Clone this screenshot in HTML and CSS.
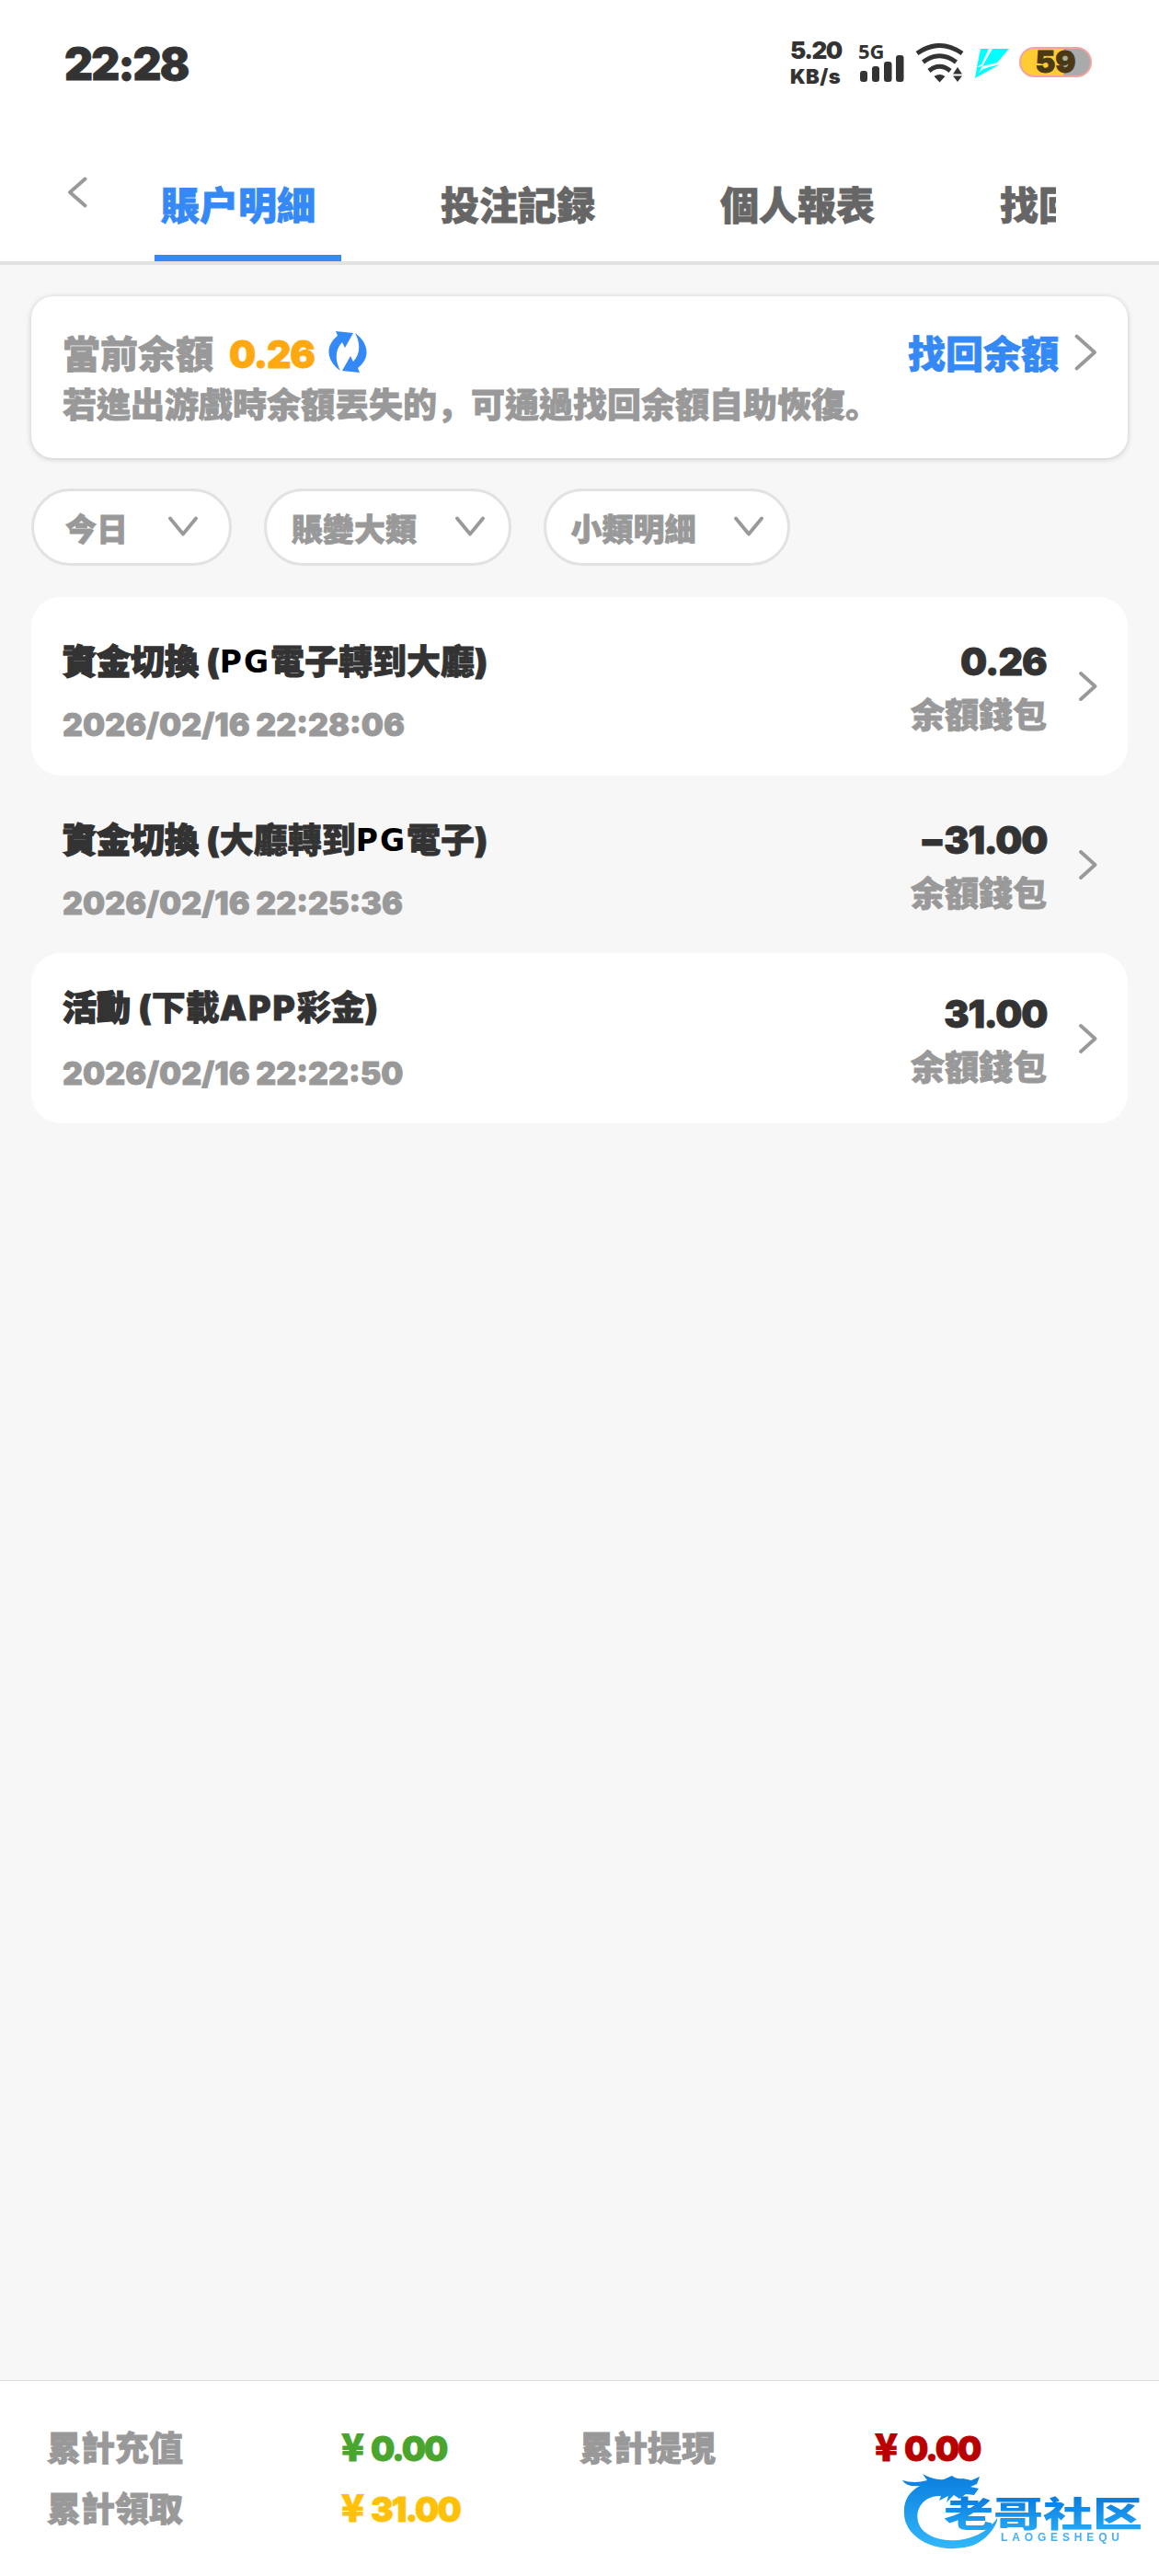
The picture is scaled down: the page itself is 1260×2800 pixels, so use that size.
FILE: index.html
```html
<!DOCTYPE html>
<html lang="zh-Hant">
<head>
<meta charset="utf-8">
<title>賬户明細</title>
<link rel="stylesheet" href="styles.css">
</head>
<body>
<header class="status">
  <div class="clock">22:28</div>
  <div class="indicators">
    <div class="speed"><span>5.20</span><span class="unit">KB/s</span></div>
    <svg class="signal" width="50" height="46" viewBox="0 0 50 46" fill="#333">
      <text class="net" x="0" y="20">5G</text>
      <rect x="2" y="33" width="8" height="12" rx="3"/><rect x="15" y="28" width="8" height="17" rx="3"/><rect x="28" y="23" width="8.500" height="22" rx="3"/><rect x="41" y="16" width="8.500" height="29" rx="3"/>
    </svg>
    <svg class="wifi" width="54" height="44" viewBox="0 0 54 44" fill="none" stroke="#333" stroke-width="5">
      <path d="M2 12Q26.500-5 51 12"/><path d="M8.500 21.500Q26.500 8 44.500 21.500"/><path d="M15 31Q26.500 21.500 38 31"/>
      <path d="M20.500 37Q26.500 33 32.500 37L26.500 43.500Z" fill="#333" stroke="none"/>
      <path d="M46 27l5 7.500H41ZM46 43l-5-6.500h10Z" fill="#333" stroke="none"/>
    </svg>
    <svg class="bolt" width="39" height="33" viewBox="0 0 39 33" fill="#0ff">
      <path d="M7 0h9L8 17l-5 3ZM20 0h18L25 15l-16 4ZM3 20l6-1-4 7 5-4 6-2 12-3L1 32Z"/>
    </svg>
    <div class="battery"><span>59</span></div>
  </div>
</header>
<nav class="nav">
  <svg class="back" width="22" height="34" viewBox="0 0 22 34"><path d="M19.500 2.500 3 17l16.500 14.500"/></svg>
  <div class="tabs">
    <div class="tab active">賬户明細</div><div class="tab">投注記録</div><div class="tab">個人報表</div><div class="tab">找回余額</div>
  </div>
</nav>
<main>
  <section class="balance">
    <div class="balance-row">
      <span class="label">當前余額</span><span class="value">0.26</span>
      <svg class="refresh" width="44" height="46" viewBox="0 0 44 46" fill="#3489f7">
        <path d="M9 0l19 2-9 16-3-6C8 20 8 32 14 43 0 33-4 17 11 5Z"/><path d="M35 45l-19-2 9-16 3 6C36 25 36 13 30 2 44 12 48 28 33 40Z"/>
      </svg>
      <span class="recover">找回余額</span>
      <svg class="more" width="25" height="40" viewBox="0 0 25 40"><path d="M2.500 2.500 22 20 2.500 37.500"/></svg>
    </div>
    <p class="hint">若進出游戲時余額丟失的<span class="punct" lang="zh-CN">，</span>可通過找回余額自助恢復<span class="punct" lang="zh-CN">。</span></p>
  </section>
  <section class="filters">
    <div class="pill day"><span>今日</span><svg width="32" height="22" viewBox="0 0 32 22"><path d="M2 2.500 16 19.500 30 2.500"/></svg></div>
    <div class="pill"><span>賬變大類</span><svg width="32" height="22" viewBox="0 0 32 22"><path d="M2 2.500 16 19.500 30 2.500"/></svg></div>
    <div class="pill"><span>小類明細</span><svg width="32" height="22" viewBox="0 0 32 22"><path d="M2 2.500 16 19.500 30 2.500"/></svg></div>
  </section>
  <section class="list">
    <article class="row">
      <div class="info"><h3><b>資金切換</b> (<i>PG</i>電子轉到大廳)</h3><time>2026/02/16 22:28:06</time></div>
      <div class="sum"><strong>0.26</strong><span>余額錢包</span></div>
      <svg class="go" width="20" height="32" viewBox="0 0 20 32"><path d="M2 2 17.500 16 2 30"/></svg>
    </article>
    <article class="row plain">
      <div class="info"><h3><b>資金切換</b> (大廳轉到<i>PG</i>電子)</h3><time>2026/02/16 22:25:36</time></div>
      <div class="sum"><strong class="long">−31.00</strong><span>余額錢包</span></div>
      <svg class="go" width="20" height="32" viewBox="0 0 20 32"><path d="M2 2 17.500 16 2 30"/></svg>
    </article>
    <article class="row short">
      <div class="info"><h3><b>活動</b> (下載<u>APP</u>彩金)</h3><time>2026/02/16 22:22:50</time></div>
      <div class="sum"><strong class="long">31.00</strong><span>余額錢包</span></div>
      <svg class="go" width="20" height="32" viewBox="0 0 20 32"><path d="M2 2 17.500 16 2 30"/></svg>
    </article>
  </section>
</main>
<footer class="totals">
  <span>累計充值</span><span class="money green"><em>¥</em>0.00</span>
  <span>累計提現</span><span class="money red"><em>¥</em>0.00</span>
  <span>累計領取</span><span class="money gold"><em>¥</em>31.00</span>
  <svg class="brand" width="264" height="88" viewBox="0 0 264 88">
    <defs><linearGradient id="sea" gradientUnits="userSpaceOnUse" x1="0" y1="5" x2="0" y2="84"><stop offset="0" stop-color="#0b7fe0"/><stop offset="1" stop-color="#32b8fa"/></linearGradient>
    <linearGradient id="ink" gradientUnits="userSpaceOnUse" x1="0" y1="30" x2="0" y2="64"><stop offset="0" stop-color="#0b7fe0"/><stop offset="1" stop-color="#25a8f5"/></linearGradient></defs>
    <path fill="url(#sea)" d="M1 9q13 4 27 0l-5-7q12 7 23 6l9-4q5 4 12 3l9 2 9-4-3 8-7 3 9 2-5 7-9-1-7 5-6-4-8 8 2-7-10 5 2-5C19 25 10 50 24 64c20 18 64 12 80-14C106 52 96 75 73 81 34 90 3 69 3 45 2 33 7 22 20 15 12 16 5 15 1 9Z"/>
    <text class="brand-name" x="46" y="59" textLength="216" lengthAdjust="spacingAndGlyphs" fill="url(#ink)">老哥社区</text>
    <text class="brand-sub" x="108" y="75" textLength="129">LAOGESHEQU</text>
  </svg>
</footer>
</body>
</html>
```
FILE: styles.css
```css
* { box-sizing: border-box; margin: 0; padding: 0; }
body {
  width: 1260px; height: 2800px; overflow: hidden;
  display: flex; flex-direction: column;
  background: #f7f7f7; color: #999;
  font-family: Inter, "Noto Sans CJK TC", sans-serif;
  font-weight: 900; white-space: nowrap;
  -webkit-text-stroke: .8px currentColor;
}
svg { display: block; flex: none; -webkit-text-stroke: 0; }
.back, .more, .go, .pill svg { fill: none; stroke: #999; stroke-width: 3.8; stroke-linecap: round; stroke-linejoin: round; }
b, i, em, h3 { font-style: normal; font-weight: 900; }
u { text-decoration: none; letter-spacing: 2px; }

.status { height: 160px; padding: 44px 73px 0 70px; display: flex; justify-content: space-between; align-items: flex-start; background: #fff; color: #333; }
.clock { font-size: 48px; line-height: 52px; letter-spacing: -1.8px; }
.indicators { display: flex; align-items: flex-start; }
.speed { width: 74px; display: flex; flex-direction: column; font-size: 26px; line-height: 22px; letter-spacing: -1.5px; -webkit-text-stroke: 0; }
.speed .unit { margin-top: 6px; font-size: 22px; letter-spacing: .4px; }
.signal { margin-right: 12px; }
.net { font: 700 22px "Noto Sans", sans-serif; }
.wifi { margin: 2px 10px 0 0; }
.bolt { margin: 9px 10px 0 0; }
.battery { margin-top: 7px; width: 79px; height: 33px; border: 2px solid #f4a3a0; border-radius: 17px; background: linear-gradient(90deg, #fc3 46px, #aaa 46px); text-align: center; color: #4a3914; font-size: 33px; line-height: 29px; }

.nav { height: 128px; display: flex; background: #fff; border-bottom: 4px solid #e2e2e2; }
.back { margin: 32px 73px 0; }
.tabs { width: 980px; overflow: hidden; display: flex; gap: 101px; }
.tab { flex: none; width: 203px; height: 124px; padding: 34px 0 0 7px; font-size: 42px; line-height: 60px; color: #666; }
.tab.active { color: #3489f7; border-bottom: 7px solid #3489f7; }

main { flex: 1; padding: 34px 34px 0; }
.balance { height: 176px; padding: 35px 33px 0 34px; border-radius: 24px; background: #fff; box-shadow: 0 1px 6px rgba(0,0,0,.2); }
.balance-row { display: flex; align-items: center; height: 56px; font-size: 41px; line-height: 56px; }
.value { width: 94px; margin: 0 13px 0 17px; color: #ffa80f; letter-spacing: -1.1px; }
.refresh { margin-top: -4px; }
.recover { margin-left: auto; color: #3489f7; }
.more { margin-left: 17px; margin-top: -4px; }
.hint { font-size: 37px; line-height: 56px; }
.punct { font-family: "Noto Sans CJK SC", sans-serif; line-height: 1; }

.filters { margin-top: 33px; display: flex; gap: 35px; }
.pill { width: 268.500px; height: 84px; padding: 0 26px 0 27px; border: 3px solid #e2e2e2; border-radius: 42px; background: #fff; display: flex; justify-content: space-between; align-items: center; font-size: 34px; }
.pill svg { margin-top: -3px; }
.day { width: 218px; padding: 0 34px; }

.list { margin-top: 34px; }
.row { height: 194px; padding: 0 33px 0 34px; display: flex; border-radius: 32px; background: #fff; }
.plain { height: 193px; background: none; }
.info { flex: 1; padding-top: 46px; }
h3 { font-size: 37px; line-height: 50px; color: #333; word-spacing: 1px; }
h3 b { -webkit-text-stroke: 1.6px currentColor; }
h3 i { color: #000; font-family: "DejaVu Sans", sans-serif; font-weight: 700; font-size: 33px; line-height: 1; letter-spacing: 2px; -webkit-text-stroke: 0; position: relative; top: -2px; }
time { display: block; margin-top: 18px; font-size: 34px; line-height: 50px; }
.sum { padding-top: 45px; display: flex; flex-direction: column; align-items: flex-end; }
.sum strong { font-size: 41px; line-height: 50px; font-weight: 900; color: #333; letter-spacing: -.8px; margin-right: 0; }
.sum .long { letter-spacing: -1.3px; }
.sum span { margin-top: 9px; font-size: 37px; line-height: 50px; }
.go { margin: 81px 0 0 35px; }
.short { height: 185px; }
.short .info { padding-top: 35px; }
.short time { margin-top: 21px; }
.short .sum { padding-top: 41px; }
.short .go { margin-top: 77px; }

.totals { height: 213px; padding: 41px 0 0 51px; border-top: 1px solid #ddd; background: #fff; display: grid; grid-template-columns: 320px 259px 321px 1fr; grid-auto-rows: 66px; font-size: 37px; line-height: 66px; position: relative; }
.money { letter-spacing: -2px; }
.money em { display: inline-block; width: 32px; font-family: "Noto Sans CJK TC", sans-serif; font-size: 41px; line-height: 1; }
.green { color: #4aa52f; }
.red { color: #b80000; }
.gold { color: #ffc107; }
.brand { position: absolute; left: 980px; top: 99px; filter: blur(.6px); }
.brand-name { font: 900 38px "Noto Sans CJK SC", sans-serif; }
.brand-sub { font: 700 12px "Liberation Sans", sans-serif; fill: #4aaef2; }
```
